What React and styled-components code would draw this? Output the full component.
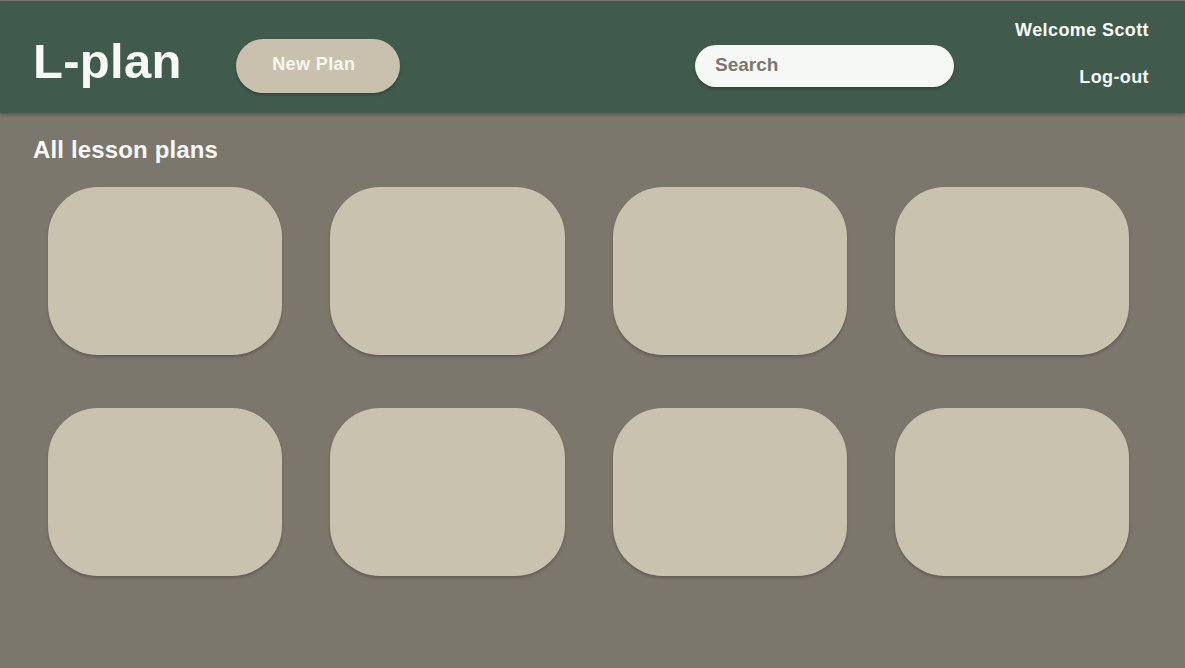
import styled, { createGlobalStyle } from 'styled-components';

const GlobalStyle = createGlobalStyle`
  html, body {
    margin: 0;
    padding: 0;
    background: #7b776d;
    font-family: "Liberation Sans", Arial, sans-serif;
  }
  * { box-sizing: border-box; }
`;

const Page = styled.div`
  min-height: 668px;
  background: #7b776d;
  padding-top: 1px;
`;

const Header = styled.header`
  height: 112px;
  background: #405b4b;
  display: flex;
  align-items: flex-start;
  padding: 0 36px 0 33px;
  box-shadow: 0 2px 3px rgba(0, 0, 0, 0.25);
  position: relative;
`;

const Logo = styled.h1`
  margin: 32px 0 0;
  font-size: 49px;
  line-height: 56px;
  font-weight: 700;
  color: #f7f8f6;
  letter-spacing: 0.3px;
`;

const PillButton = styled.button`
  margin: 38px 0 0 54px;
  width: 164px;
  height: 54px;
  border: none;
  border-radius: 27px;
  background: #c9c1ae;
  color: #f8f7f2;
  font-family: inherit;
  font-size: 18px;
  font-weight: 700;
  letter-spacing: 0.4px;
  box-shadow: 0 2px 3px rgba(0, 0, 0, 0.25);
  cursor: pointer;
  padding: 0 8px 4px 0;
`;

const SearchBox = styled.input`
  margin: 44px 0 0 auto;
  width: 259px;
  height: 42px;
  border: none;
  border-radius: 21px;
  background: #f6f8f6;
  padding: 0 20px 3px;
  font-family: inherit;
  font-size: 19px;
  font-weight: 700;
  color: #7b776d;
  box-shadow: 0 2px 3px rgba(0, 0, 0, 0.25);
  outline: none;
  &::placeholder { color: #7b776d; }
`;

const UserMenu = styled.div`
  margin: 19px 0 0 59px;
  width: 136px;
  display: flex;
  flex-direction: column;
  align-items: flex-end;
  gap: 27px;
`;

const UserLink = styled.span`
  font-size: 18px;
  font-weight: 700;
  color: #f7f8f6;
  line-height: 20px;
  letter-spacing: 0.4px;
  cursor: pointer;
`;

const Main = styled.main`
  padding: 24px 56px 0 33px;
`;

const Title = styled.h2`
  margin: 0 0 24px;
  font-size: 24px;
  font-weight: 700;
  color: #f7f8f6;
  line-height: 26px;
  letter-spacing: 0.15px;
`;

const Grid = styled.div`
  display: grid;
  grid-template-columns: repeat(4, 1fr);
  column-gap: 48px;
  row-gap: 53px;
  padding-left: 15px;
`;

const Card = styled.div`
  height: 168px;
  border-radius: 50px;
  background: #c9c2af;
  box-shadow: 0 2px 3px rgba(0, 0, 0, 0.22);
`;

export default function App() {
  const plans = Array.from({ length: 8 }, (_, i) => i);
  return (
    <Page>
      <GlobalStyle />
      <Header>
        <Logo>L-plan</Logo>
        <PillButton>New Plan</PillButton>
        <SearchBox placeholder="Search" />
        <UserMenu>
          <UserLink>Welcome Scott</UserLink>
          <UserLink>Log-out</UserLink>
        </UserMenu>
      </Header>
      <Main>
        <Title>All lesson plans</Title>
        <Grid>
          {plans.map((p) => (
            <Card key={p} />
          ))}
        </Grid>
      </Main>
    </Page>
  );
}
